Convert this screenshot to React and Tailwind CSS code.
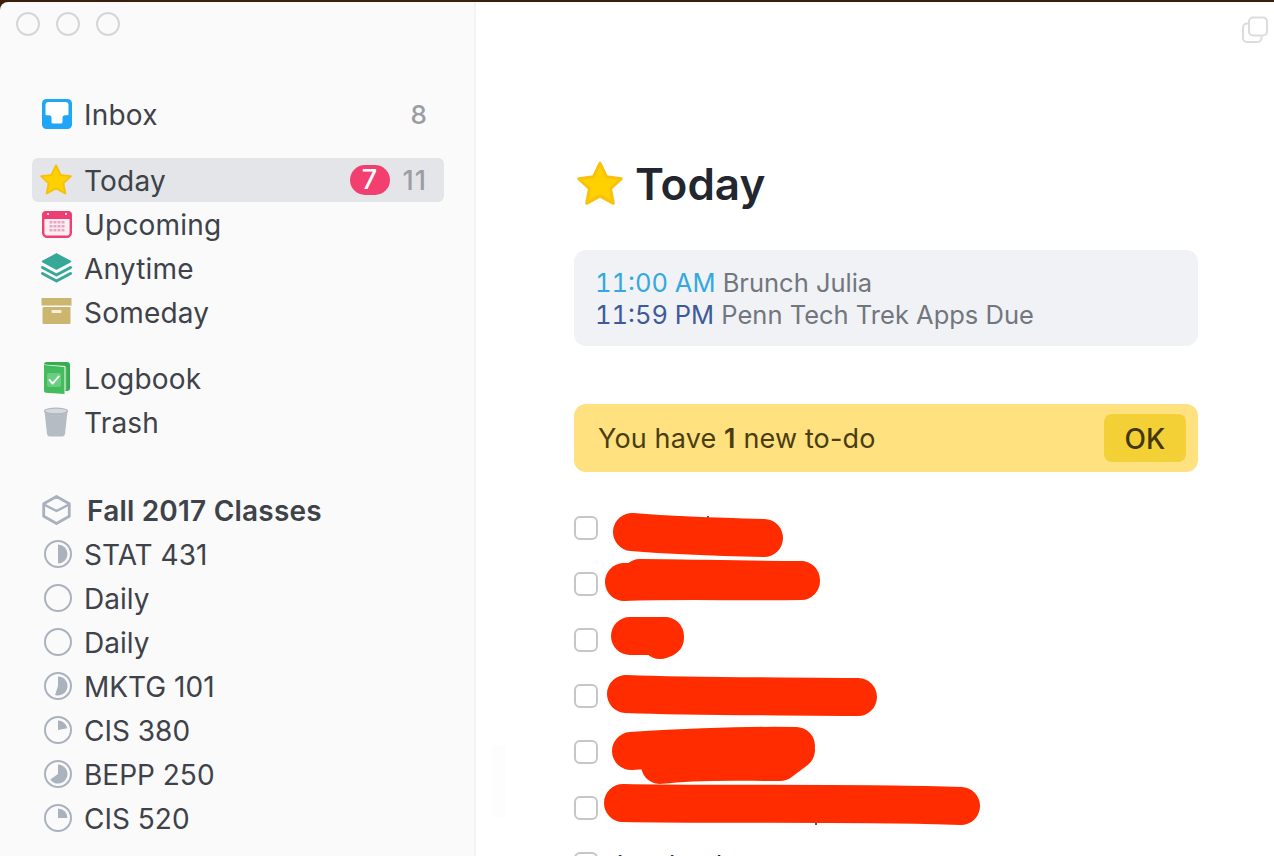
import React from "react";

function Star({ size = 36 }) {
  return (
    <svg width={size} height={size} viewBox="0 0 36 36">
      <path
        d="M18 3.500l4.600 9.500 10.200 1.300-7.500 7 2 10.100L18 26.400 8.700 31.400l2-10.100-7.500-7 10.200-1.300z"
        fill="#ffd000"
        stroke="#f7c20e"
        strokeWidth="2"
        strokeLinejoin="round"
      />
    </svg>
  );
}

function InboxIcon() {
  return (
    <svg width="32" height="32" viewBox="-2 0 32 32">
      <rect x="0" y="1" width="30" height="30" rx="4.500" fill="#1fa6f4" />
      <path d="M3.500 7a3 3 0 0 1 3-3h17a3 3 0 0 1 3 3v9.500q0 .8-1 .8h-2.500q-2.500 0-2.500 2.500v4.200q0 1.500-1.500 1.500h-8q-1.500 0-1.500-1.500v-4.200q0-2.500-2.500-2.500H4.500q-1 0-1-.8z" fill="#fff" />
    </svg>
  );
}

function CalendarIcon() {
  const dots = [];
  for (let r = 0; r < 3; r++) {
    for (let c = 0; c < 4; c++) {
      dots.push(<rect key={r + "-" + c} x={7.500 + c * 4} y={13 + r * 4} width="3" height="2.500" fill="#eba6bf" />);
    }
  }
  return (
    <svg width="32" height="32" viewBox="-2 0 32 32">
      <rect x="1.200" y="4.200" width="27.600" height="24.600" rx="4" fill="#fbeef3" stroke="#ee3f74" strokeWidth="2.400" />
      <path d="M0 11V7a4 4 0 0 1 4-4h22a4 4 0 0 1 4 4v4z" fill="#ee3f74" />
      <rect x="5" y="5" width="2" height="2" fill="#fbd3df" />
      <rect x="23" y="5" width="2" height="2" fill="#fbd3df" />
      {dots}
    </svg>
  );
}

function LayersIcon() {
  return (
    <svg width="34" height="32" viewBox="-0.500 0 34 32">
      <path d="M17 2l14 7.500L17 17 3 9.500z" fill="#37a79a" stroke="#37a79a" strokeWidth="1.500" strokeLinejoin="round" />
      <path d="M3 15.500l14 7.500 14-7.500" fill="none" stroke="#37a79a" strokeWidth="3" strokeLinecap="round" strokeLinejoin="round" />
      <path d="M3 21.500l14 7.500 14-7.500" fill="none" stroke="#37a79a" strokeWidth="3" strokeLinecap="round" strokeLinejoin="round" />
    </svg>
  );
}

function BoxIcon() {
  return (
    <svg width="32" height="30" viewBox="-0.500 0 32 30">
      <rect x="1" y="1" width="30" height="7.500" fill="#ccb66f" />
      <rect x="2" y="10" width="28" height="17" rx="1" fill="#ccb66f" />
      <rect x="11" y="13" width="10" height="3" rx="1" fill="#f5f0dc" />
    </svg>
  );
}

function LogbookIcon() {
  return (
    <svg width="30" height="34" viewBox="0 0 30 34">
      <path d="M3 3.500a2.500 2.500 0 0 1 2.500-2.500H26a3 3 0 0 1 3 3v23a3 3 0 0 1-3 3h-2V5L3 3.500z" fill="#37ad52" />
      <path d="M24.700 5.500v24" stroke="#d8f0de" strokeWidth="0.800" />
      <path d="M3 4l20.500 2v27L5 31.700a2 2 0 0 1-2-2z" fill="#44bb5c" />
      <rect x="6" y="12" width="14" height="14" rx="2" fill="#6bcd80" />
      <path d="M8.500 19l3.200 3.500 6-7" fill="none" stroke="#fff" strokeWidth="1.900" strokeLinecap="round" strokeLinejoin="round" />
    </svg>
  );
}

function TrashIcon() {
  return (
    <svg width="28" height="32" viewBox="0 0 28 32">
      <path d="M2.500 5h23l-2.500 23a3 3 0 0 1-3 2.500H8a3 3 0 0 1-3-2.500z" fill="#b5bcc3" />
      <ellipse cx="14" cy="5" rx="11.500" ry="2.800" fill="#d6dade" stroke="#b0b7be" strokeWidth="1.200" />
    </svg>
  );
}

function ProjectBox() {
  return (
    <svg width="32" height="32" viewBox="-1.500 0 32 32">
      <path d="M15 2.500l12.800 7.300v12.400L15 29.500 2.200 22.200V9.800z" fill="none" stroke="#a9b1bd" strokeWidth="2.800" strokeLinejoin="round" />
      <path d="M2.500 10.500L15 17l12.500-6.500" fill="none" stroke="#a9b1bd" strokeWidth="2.500" strokeLinejoin="round" />
    </svg>
  );
}

// progress ring used by the projects, fraction is how much of the pie is filled
function Pie({ fraction }) {
  const r = 9.500;
  const a = fraction * 2 * Math.PI;
  const x = 16 + r * Math.sin(a);
  const y = 16 - r * Math.cos(a);
  const large = fraction > 0.5 ? 1 : 0;
  return (
    <svg width="32" height="32" viewBox="-2 0 32 32">
      <circle cx="16" cy="16" r="13" fill="none" stroke="#aab2bd" strokeWidth="2" />
      {fraction > 0 && (
        <path d={`M16 16V${16 - r}A${r} ${r} 0 ${large} 1 ${x} ${y}z`} fill="#aab2bd" />
      )}
    </svg>
  );
}

function Row({ icon, label, bold, children, active }) {
  return (
    <div className={active ? "flex items-center h-[44px] rounded-md bg-[#e4e5e9]" : "flex items-center h-[44px]"}>
      <div className="w-[48px] flex items-center justify-center shrink-0">{icon}</div>
      <span className={bold ? "ml-[7px] mt-[1px] font-semibold" : "ml-[4px] mt-[1px]"}>{label}</span>
      {children}
    </div>
  );
}

const projects = [
  ["STAT 431", 0.5],
  ["Daily", 0],
  ["Daily", 0],
  ["MKTG 101", 0.55],
  ["CIS 380", 0.22],
  ["BEPP 250", 0.65],
  ["CIS 520", 0.25],
];

function Sidebar() {
  return (
    <div className="w-[476px] shrink-0 h-full bg-[#fafafb] border-r-2 border-[#f3f3f4] text-[28px] leading-[44px] tracking-[0.2px] text-[#3e4249]">
      <div className="flex gap-4 pl-4 pt-[10px]">
        <div className="w-6 h-6 rounded-full border-2 border-[#d4d6d9]" />
        <div className="w-6 h-6 rounded-full border-2 border-[#d4d6d9]" />
        <div className="w-6 h-6 rounded-full border-2 border-[#d4d6d9]" />
      </div>
      <div className="pl-8 pr-[30px] pt-[56px]">
        <Row icon={<InboxIcon />} label="Inbox">
          <span className="ml-auto mt-[2px] pr-[17px] text-[26px] font-medium text-[#9b9da2]">8</span>
        </Row>
        <div className="mt-[22px]">
          <Row active icon={<Star />} label="Today">
            <span className="ml-auto flex items-center justify-center w-10 h-[30px] rounded-full bg-[#f23f70] text-white text-[27px] font-medium">7</span>
            <span className="ml-[13px] mt-[2px] pr-[17px] text-[27px] font-medium tracking-[1px] text-[#9b9da2]">11</span>
          </Row>
          <Row icon={<CalendarIcon />} label="Upcoming" />
          <Row icon={<LayersIcon />} label="Anytime" />
          <Row icon={<BoxIcon />} label="Someday" />
        </div>
        <div className="mt-[22px]">
          <Row icon={<LogbookIcon />} label="Logbook" />
          <Row icon={<TrashIcon />} label="Trash" />
        </div>
        <div className="mt-[44px]">
          <Row bold icon={<ProjectBox />} label="Fall 2017 Classes" />
          <div className="tracking-normal">
            {projects.map(([name, fraction], i) => (
              <Row key={i} icon={<Pie fraction={fraction} />} label={name} />
            ))}
          </div>
        </div>
      </div>
    </div>
  );
}

// red marker strokes over the hidden to-do titles, in page coordinates
const scribbles = [
  "M632 532 C680 536 720 537 764 538",
  "M624 582 C680 580 740 582 801 581 M640 578 C680 578 740 580 801 580",
  "M630 636 L665 636 M660 640 L665 638",
  "M626 694 C700 697 780 696 858 697",
  "M631 751 C680 748 740 745 796 746 M660 765 C700 760 740 762 780 762 L796 750",
  "M623 803 C720 805 850 802 961 806",
];

function Todo() {
  return (
    <div className="flex items-center h-14">
      <div className="w-6 h-6 rounded-md border-2 border-[#c5c6c8] bg-white" />
    </div>
  );
}

function Main() {
  return (
    <div className="relative flex-1 h-full bg-white pl-[98px] pr-[76px] pt-[154px]">
      <svg className="absolute top-[14px] right-[5px]" width="28" height="28" viewBox="0 0 28 28" fill="none" stroke="#dcdcdd" strokeWidth="2">
        <rect x="8" y="1.500" width="18" height="18" rx="4" />
        <path d="M8 7.500H6a4 4 0 0 0-4 4V22a4 4 0 0 0 4 4h10.500a4 4 0 0 0 4-4v-2.500" />
      </svg>
      <div className="absolute left-[15px] top-[743px] w-[15px] h-[72px] rounded bg-[#fdfdfd]" />

      <div className="flex items-center h-[56px]">
        <div className="w-[52px] flex justify-center">
          <Star size={52} />
        </div>
        <h1 className="ml-[9px] text-[44px] leading-[56px] font-semibold text-[#22262e]">Today</h1>
      </div>

      <div className="mt-[38px] h-24 rounded-xl bg-[#f0f2f5] pl-[21px] pr-[22px] pt-[17px] text-[25.5px] leading-8 text-[#72767e]">
        <div><span className="tabular-nums text-[#35a8e0]">11:00 AM</span> Brunch Julia</div>
        <div><span className="tabular-nums text-[#3f5a9a]">11:59 PM</span> Penn Tech Trek Apps Due</div>
      </div>

      <div className="mt-[58px] h-[68px] rounded-xl bg-[#ffe17f] flex items-center pl-6 pr-3 text-[27px] tracking-[0.15px] text-[#4a3d12]">
        <span className="mt-[2px]">You have <span className="font-semibold">1</span> new to-do</span>
        <div className="ml-auto w-[82px] h-12 rounded-lg bg-[#f3d036] flex items-center justify-center text-[28px] font-medium text-[#43360b]">
          <span className="mt-[2px]">OK</span>
        </div>
      </div>

      <div className="mt-[28px]">
        {scribbles.map((_, i) => (
          <Todo key={i} />
        ))}
        <div className="flex items-center h-14 text-[26px] text-[#22262e]">
          <div className="w-6 h-6 rounded-md border-2 border-[#c5c6c8] bg-white" />
          <span className="ml-[19px]">lunch ads</span>
        </div>
      </div>
    </div>
  );
}

export default function App() {
  return (
    <div className="relative w-[1274px] h-[856px] overflow-hidden bg-[#3c1e0b] pt-[2px] font-[family-name:Inter,sans-serif]">
      <div className="flex h-[854px] rounded-tl-lg overflow-hidden">
        <Sidebar />
        <Main />
      </div>
      {/* marker strokes lie over the to-do list */}
      <svg className="absolute left-0 top-0 pointer-events-none" width="1274" height="856" fill="none" stroke="#ff2c00" strokeWidth="38" strokeLinecap="round" strokeLinejoin="round">
        <path d="M708 516v4M733 518v3M816 822v3" stroke="#22262e" strokeWidth="1.500" strokeLinecap="butt" />
        {scribbles.map((d, i) => (
          <path key={i} d={d} />
        ))}
      </svg>
    </div>
  );
}
